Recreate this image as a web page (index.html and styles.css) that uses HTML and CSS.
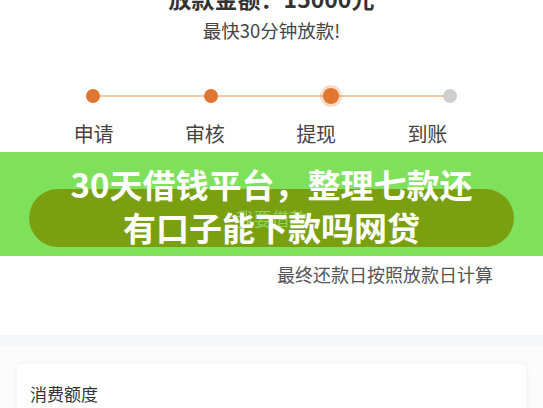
FILE: index.html
```html
<!DOCTYPE html>
<html>
<head>
  <title>借款进度</title>
  <link rel="stylesheet" href="styles.css">
</head>
<body>
  <div class="summary">
    <h2 class="amount">放款金额：15000元</h2>
    <p class="speed">最快30分钟放款!</p>
  </div>

  <div class="steps">
    <div class="dots">
      <span class="dot"></span>
      <span class="dot"></span>
      <span class="dot active"></span>
      <span class="dot todo"></span>
    </div>
    <div class="labels">
      <span>申请</span>
      <span>审核</span>
      <span>提现</span>
      <span>到账</span>
    </div>
  </div>

  <div class="banner">
    <div class="pill">我要借款</div>
    <h1 class="caption">30天借钱平台，整理七款还<br>有口子能下款吗网贷</h1>
  </div>

  <p class="note">最终还款日按照放款日计算</p>

  <div class="divider"></div>

  <div class="lower">
    <div class="card">
      <div class="card-title">消费额度</div>
    </div>
  </div>
</body>
</html>
```

FILE: styles.css
```css
body {
  margin: 0;
  background-color: #fff;
  font-family: "Noto Sans CJK SC", "Noto Sans", sans-serif;
  color: #333;
  overflow: hidden;
}

.summary {
  text-align: center;
  margin-top: -17px;
}

.amount {
  margin: 0;
  font-size: 23px;
  line-height: 30px;
  font-weight: bold;
  color: #333;
}

.speed {
  margin: 5px 0 0;
  font-size: 18.5px;
  line-height: 24px;
  color: #444;
}

.steps {
  margin-top: 45px;
}

.dots {
  position: relative;
  display: flex;
  justify-content: space-between;
  align-items: center;
  margin: 0 86px;
  height: 18px;
}

/* the track behind the dots */
.dots::before {
  content: "";
  position: absolute;
  left: 7px;
  right: 7px;
  top: 8px;
  height: 2px;
  background-color: #f4c7a2;
}

.dot {
  position: relative;
  width: 14px;
  height: 14px;
  border-radius: 50%;
  background-color: #e07631;
}

.dot.active {
  width: 16px;
  height: 16px;
  box-shadow: 0 0 0 3px rgba(232, 130, 60, 0.28);
}

.dot.todo {
  background-color: #cfcfcf;
}

.labels {
  display: grid;
  grid-template-columns: repeat(4, 1fr);
  margin: 15px 60px 0 38px;
  font-size: 20px;
  line-height: 28px;
  color: #444;
  text-align: center;
}

.banner {
  position: relative;
  margin-top: 4px;
  height: 104px;
  padding-top: 37px;
  box-sizing: border-box;
  background-color: #7fe05c;
}

.pill {
  margin: 0 29px 0 29px;
  height: 58px;
  border-radius: 29px;
  background-color: #7aa012;
  color: #8fd35a;
  font-size: 18px;
  line-height: 58px;
  text-align: center;
}

.caption {
  position: absolute;
  left: 0;
  right: 0;
  top: 11px;
  margin: 0;
  font-size: 33px;
  line-height: 43px;
  font-weight: bold;
  color: #fff;
  text-align: center;
}

.note {
  margin: 6px 50px 0 0;
  font-size: 18px;
  line-height: 24px;
  color: #555;
  text-align: right;
}

.divider {
  margin-top: 49px;
  height: 11px;
  background-color: #f5f6f8;
}

.lower {
  padding: 18px 17px 0 17px;
  background-color: #fcfcfc;
}

.card {
  background-color: #fff;
  box-shadow: 0 0 6px rgba(0, 0, 0, 0.06);
  padding: 18px 13px 20px;
  border-radius: 4px;
}

.card-title {
  font-size: 17px;
  line-height: 24px;
  color: #333;
}
```
